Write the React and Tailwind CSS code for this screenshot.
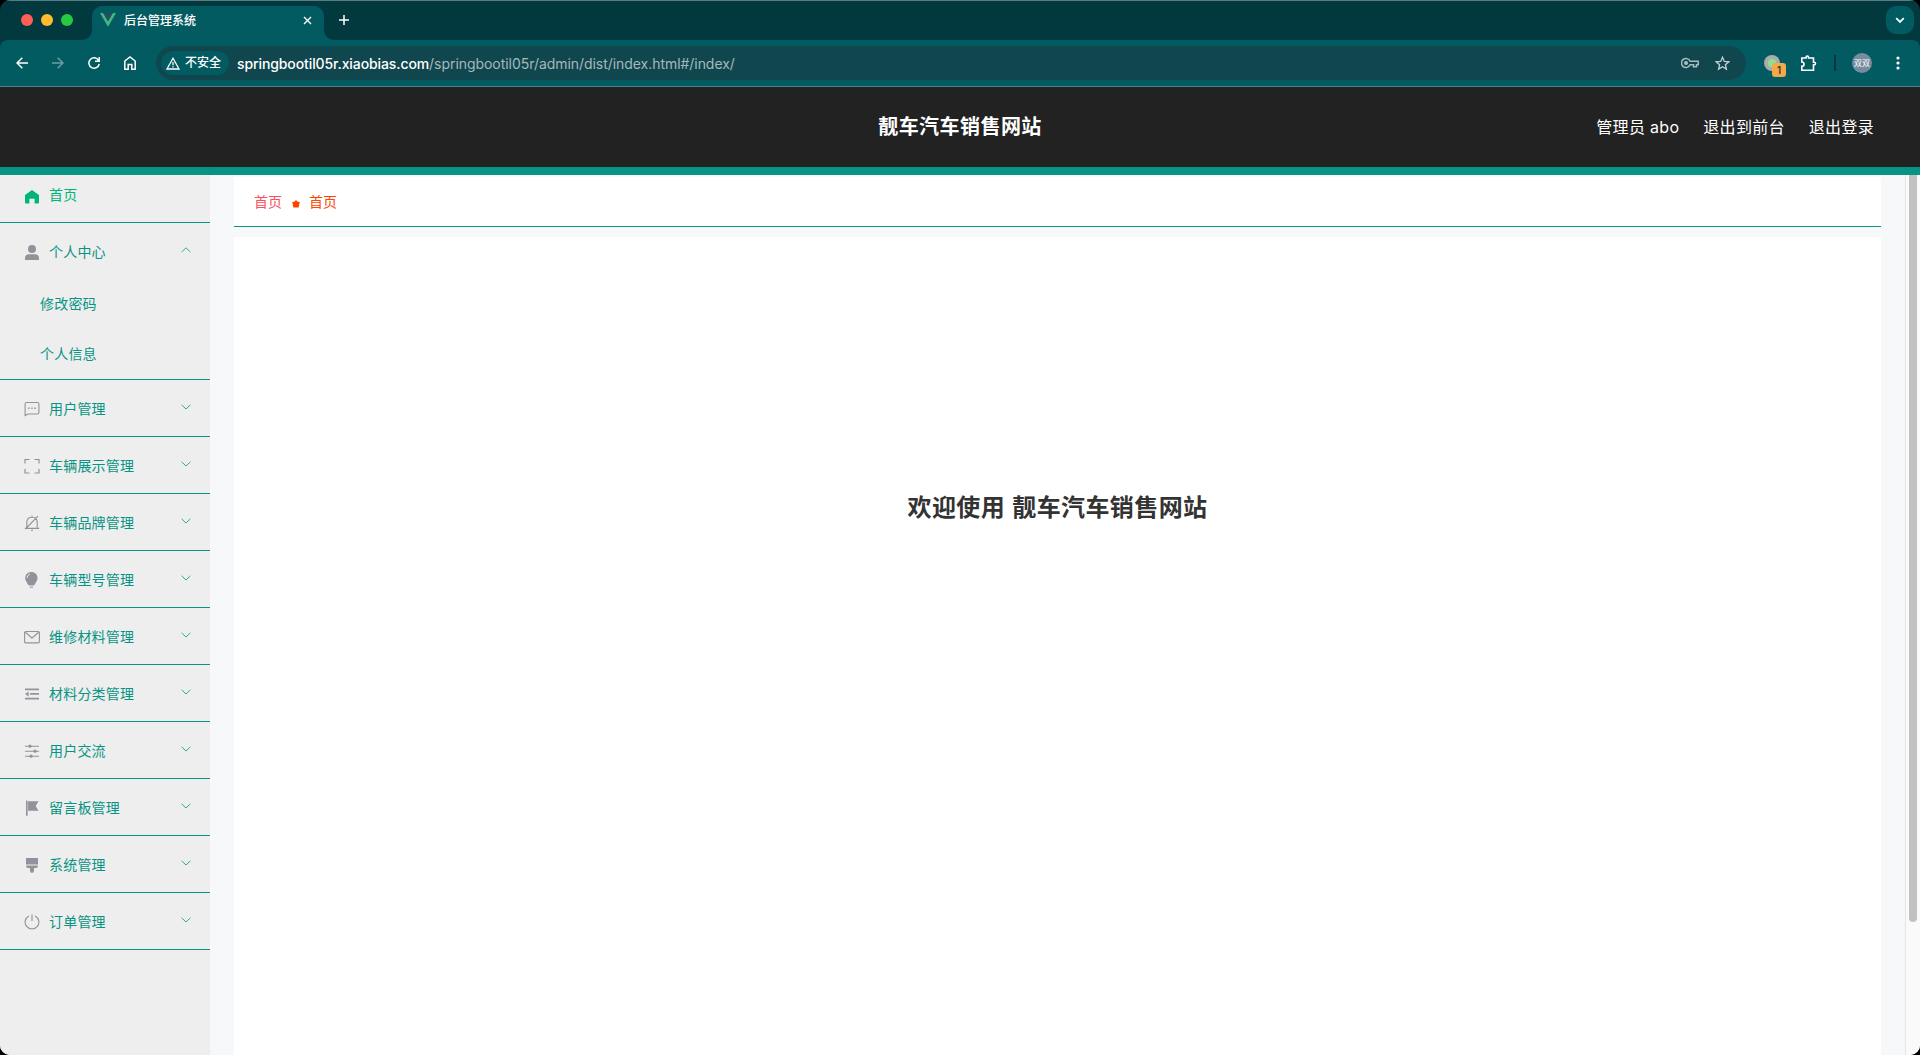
import React, { useState } from "react";

const iconColor = "#909399";

const icons = {
  home: (
    <svg width="14" height="14" viewBox="0 0 14 14" fill="#00b578">
      <path d="M7 0L13.6 4.8C13.9 5 14 5.3 14 5.6V12.6C14 13.1 13.6 13.5 13.1 13.5H9.6V8.8H4.4V13.5H.9C.4 13.5 0 13.1 0 12.6V5.6C0 5.3.1 5 .4 4.8Z" />
    </svg>
  ),
  user: (
    <svg width="14" height="15" viewBox="0 0 14 15" fill={iconColor}>
      <circle cx="7" cy="4" r="4" />
      <path d="M0 15V13C0 10.8 1.6 9.2 3.8 9.2H10.2C12.4 9.2 14 10.8 14 13V15Z" />
    </svg>
  ),
  chat: (
    <svg width="16" height="16" viewBox="0 0 16 16" fill="none" stroke={iconColor} strokeWidth="1.1">
      <path d="M1.1 14.6V3Q1.1 1.5 2.6 1.5H13.4Q14.9 1.5 14.9 3V11.5Q14.9 13 13.4 13H4Z" />
      <path d="M4.2 7.2H5.6M7.3 7.2H8.7M10.4 7.2H11.8" strokeWidth="1.4" />
    </svg>
  ),
  screen: (
    <svg width="16" height="16" viewBox="0 0 16 16" fill="none" stroke={iconColor}>
      <path d="M1 5.5V1.5H5.5M10.5 1.5H15V5.5M15 11V15H10.5M5.5 15H1V11" strokeWidth="1.2" />
    </svg>
  ),
  bell: (
    <svg width="16" height="16" viewBox="0 0 16 16" fill="none" stroke={iconColor} strokeWidth="1.1">
      <path d="M.8 13.4H15.2M2.8 13V7.5C2.8 4.2 5 2.2 8 2.2S13.2 4.2 13.2 7.5V13M8 .6V2.2M1.4 14L14 1.2M7 15.3H9" />
    </svg>
  ),
  bulb: (
    <svg width="16" height="16" viewBox="0 0 16 16" fill={iconColor}>
      <path d="M7.3 0C3.8 0 1.2 2.6 1.2 6C1.2 9 3 10.4 4.2 12.8Q4.5 13.6 5.2 13.6H9.5Q10.2 13.6 10.5 12.8C11.7 10.4 13.5 9 13.5 6C13.5 2.6 10.9 0 7.3 0Z" />
      <path d="M5.8 14.7H9V15.7H5.8Z" />
      <path d="M3 6Q3.2 2.8 6 1.9" fill="none" stroke="#eee" strokeWidth=".9" />
    </svg>
  ),
  mail: (
    <svg width="16" height="16" viewBox="0 0 16 16" fill="none" stroke={iconColor} strokeWidth="1.1">
      <rect x=".6" y="2.5" width="14.8" height="11.4" rx="1.2" />
      <path d="M1 3L8 9L15 3" />
    </svg>
  ),
  fold: (
    <svg width="16" height="16" viewBox="0 0 16 16" fill={iconColor}>
      <path d="M1 2.4H15V4.2H1ZM6 7H15V8.8H6ZM1 11.8H15V13.6H1ZM1 7.9L4.6 5.4V10.4Z" />
    </svg>
  ),
  operation: (
    <svg width="16" height="16" viewBox="0 0 16 16" fill={iconColor}>
      <path d="M1 2.8H15V3.7H1ZM1 7.8H15V8.7H1ZM1 12.8H15V13.7H1Z" />
      <circle cx="6" cy="3.2" r="1.6" />
      <circle cx="11" cy="8.2" r="1.6" />
      <circle cx="7" cy="13.2" r="1.6" />
    </svg>
  ),
  flag: (
    <svg width="16" height="16" viewBox="0 0 16 16" fill={iconColor}>
      <path d="M2 .5H3.6V15.7H2ZM4.1 1.2H14.6L11.6 6L14.6 10.8H4.1Z" />
    </svg>
  ),
  brush: (
    <svg width="16" height="16" viewBox="0 0 16 16" fill={iconColor}>
      <path d="M2 1H14V7.6H2ZM2 8.4H14C14 10 13 11 11.4 11H10V13.5C10 15 9.2 15.8 8 15.8S6 15 6 13.5V11H4.6C3 11 2 10 2 8.4Z" />
    </svg>
  ),
  power: (
    <svg width="16" height="16" viewBox="0 0 16 16" fill="none" stroke={iconColor} strokeWidth="1.1">
      <path d="M5 1.9A6.9 6.9 0 1 0 11 1.9M8 .6V7" />
    </svg>
  ),
};

const menus = [
  { name: "个人中心", icon: "user", children: ["修改密码", "个人信息"] },
  { name: "用户管理", icon: "chat" },
  { name: "车辆展示管理", icon: "screen" },
  { name: "车辆品牌管理", icon: "bell" },
  { name: "车辆型号管理", icon: "bulb" },
  { name: "维修材料管理", icon: "mail" },
  { name: "材料分类管理", icon: "fold" },
  { name: "用户交流", icon: "operation" },
  { name: "留言板管理", icon: "flag" },
  { name: "系统管理", icon: "brush" },
  { name: "订单管理", icon: "power" },
];

const TabStrip = () => (
  <div className="flex h-10 shrink-0 items-end border-t border-[#5b7c80] bg-[#02393e]">
    <div className="flex h-[39px] w-[92px] shrink-0 items-center gap-2 pb-px pl-[21px]">
      <span className="h-3 w-3 rounded-full bg-[#ff5f57]" />
      <span className="h-3 w-3 rounded-full bg-[#febc2e]" />
      <span className="h-3 w-3 rounded-full bg-[#28c840]" />
    </div>
    <div className="relative flex h-[34px] w-[232px] shrink-0 items-center rounded-t-[10px] bg-[#035b62] pr-3 pl-2 text-white">
      <svg className="absolute bottom-0 -left-[10px]" width="10" height="10" fill="#035b62">
        <path d="M10 0V10H0A10 10 0 0 0 10 0Z" />
      </svg>
      <svg className="absolute -right-[10px] bottom-0" width="10" height="10" fill="#035b62">
        <path d="M0 0V10H10A10 10 0 0 1 0 0Z" />
      </svg>
      <svg className="mb-1.5" width="16" height="14" viewBox="0 0 16 14">
        <path d="M0 0H3.2L8 8.3L12.8 0H16L8 13.8Z" fill="#41b883" />
        <path d="M3.2 0H6.1L8 3.3L9.9 0H12.8L8 8.3Z" fill="#35495e" />
      </svg>
      <span className="mb-[5px] ml-2 flex-1 text-[12px] leading-4 font-medium">后台管理系统</span>
      <svg className="mb-[5px]" width="9" height="9" viewBox="0 0 9 9" stroke="#fff" strokeWidth="1.4">
        <path d="M1 1L8 8M8 1L1 8" />
      </svg>
    </div>
    <svg className="mb-[15px] ml-[15px]" width="10" height="10" viewBox="0 0 10 10" stroke="#fff" strokeWidth="1.5">
      <path d="M5 0V10M0 5H10" />
    </svg>
    <div className="mr-1.5 mb-1.5 ml-auto flex h-7 w-7 items-center justify-center rounded-[10px] bg-[#035b62]">
      <svg width="10" height="7" viewBox="0 0 10 7" fill="none" stroke="#fff" strokeWidth="1.8">
        <path d="M1.2 1.2L5 5L8.8 1.2" />
      </svg>
    </div>
  </div>
);

const Toolbar = () => (
  <div className="shrink-0 bg-[#02393e]">
    <div className="flex h-[47px] items-center rounded-t-[8px] border-b border-[#4d8388] bg-[#035b62] text-white">
      <div className="flex w-[156px] shrink-0 items-center pl-4">
        <svg width="12" height="12" viewBox="0 0 12 12" fill="none" stroke="#fff" strokeWidth="1.5">
          <path d="M12 6H1M6.3 .7L1 6L6.3 11.3" />
        </svg>
        <svg className="ml-6" width="12" height="12" viewBox="0 0 12 12" fill="none" stroke="#6f9da2" strokeWidth="1.5">
          <path d="M0 6H11M5.7 .7L11 6L5.7 11.3" />
        </svg>
        <svg className="ml-6" width="12" height="12" viewBox="0 0 12 12" fill="none" stroke="#fff" strokeWidth="1.5">
          <path d="M10.6 3.4A5.2 5.2 0 1 0 11.2 7M11.2 0V4.2H7" />
        </svg>
        <svg className="ml-6" width="12" height="14" viewBox="0 0 12 14" fill="none" stroke="#fff" strokeWidth="1.5">
          <path d="M.8 5L6 1L11.2 5V13.2H7.8V8.5H4.2V13.2H.8Z" />
        </svg>
      </div>
      <div className="flex h-[34px] w-[1590px] shrink-0 items-center rounded-full bg-[#10474e] pr-4 pl-[5px]">
        <div className="flex h-6 w-[68px] items-center gap-[5px] rounded-full bg-[#035b62] pl-[5px]">
          <svg width="14" height="13" viewBox="0 0 14 13" fill="none" stroke="#fff" strokeWidth="1.3">
            <path d="M7 1.3L13 12H1ZM7 5V8.3M7 9.2V10.5" />
          </svg>
          <span className="text-[12px] font-medium whitespace-nowrap">不安全</span>
        </div>
        <div className="ml-2 flex-1 text-[14px] tracking-[-0.05px] text-[#a3b9bb]">
          <span className="font-medium tracking-[-0.1px] text-white">springbootil05r.xiaobias.com</span>/springbootil05r/admin/dist/index.html#/index/
        </div>
        <svg width="18" height="12" viewBox="0 0 18 12" fill="none" stroke="#a9bcbd" strokeWidth="1.5">
          <path d="M9.1 4.2A4.5 4.5 0 1 0 9.1 7.8H12.5V9.8H15.5V7.8H17.2V4.2Z" />
          <circle cx="5" cy="6" r="1.3" fill="#a9bcbd" />
        </svg>
        <svg className="ml-4" width="15" height="15" viewBox="0 0 15 15" fill="none" stroke="#c3d0d1" strokeWidth="1.3">
          <path d="M7.5 1.3L9.3 5.4L13.8 5.8L10.4 8.7L11.4 13.1L7.5 10.8L3.6 13.1L4.6 8.7L1.2 5.8L5.7 5.4Z" />
        </svg>
      </div>
      <div className="relative ml-[18px] h-4 w-4 rounded-full bg-[#a9acad] p-1">
        <div className="h-2 w-2 rounded-full bg-[#8de18f]" />
        <span className="absolute top-2 left-2 flex h-[14px] w-[14px] items-center justify-center rounded-[3px] bg-[#f2a94a] text-[10px] font-medium text-[#222]">1</span>
      </div>
      <svg className="ml-5" width="17" height="17" viewBox="0 0 17 17" fill="none" stroke="#fff" strokeWidth="1.6">
        <path d="M1.8 3H6V2.4A1.3 1.3 0 0 1 8.6 2.4V3H13.5V7.3H14.2A1.3 1.3 0 0 1 14.2 9.9H13.5V15.2H1.8V11.4A2.2 2.2 0 0 0 1.8 7Z" />
      </svg>
      <span className="ml-[17px] h-4 w-[2px] bg-[#02393e]" />
      <span className="ml-4 flex h-5 w-5 items-center justify-center rounded-full bg-[#778d9d] text-[8px] whitespace-nowrap">双双</span>
      <svg className="ml-6" width="4" height="14" fill="#fff">
        <circle cx="2" cy="2" r="1.6" />
        <circle cx="2" cy="7" r="1.6" />
        <circle cx="2" cy="12" r="1.6" />
      </svg>
    </div>
  </div>
);

const Header = () => (
  <div className="grid h-[88px] shrink-0 grid-cols-3 items-center border-b-8 border-[#089484] bg-[#222] text-white">
    <div />
    <h1 className="text-center text-[20px] font-bold tracking-[0.45px]">靓车汽车销售网站</h1>
    <div className="flex justify-end gap-6 pr-[46px] text-[16px] tracking-[0.3px]">
      <span>管理员 abo</span>
      <span>退出到前台</span>
      <span>退出登录</span>
    </div>
  </div>
);

const Sidebar = () => {
  const [opened, setOpened] = useState("个人中心");

  return (
    <div className="w-[210px] shrink-0 bg-[#eee] text-[14px] tracking-[0.2px] text-[#089484]">
      <div className="flex h-12 items-center border-b border-[#089484] pb-2 pl-6 text-[#00b578]">
        <span className="mt-1 flex w-6 items-center pl-px">{icons.home}</span>
        <span className="ml-px">首页</span>
      </div>
      {menus.map((menu) => (
        <div key={menu.name} className="border-b border-[#089484]">
          <div className="flex h-14 cursor-pointer items-center pl-6" onClick={() => setOpened(menu.name)}>
            <span className="mt-0.5 flex w-[25px] items-center">
              <span className="flex w-4 justify-center">{icons[menu.icon]}</span>
            </span>
            <span>{menu.name}</span>
            <svg className="mr-[19px] mb-0.5 ml-auto" width="10" height="6" viewBox="0 0 10 6" fill="none" stroke="#089484" strokeWidth=".8">
              {menu.children && opened === menu.name ? <path d="M.6 5L5 .8L9.4 5" /> : <path d="M.6 .8L5 5L9.4 .8" />}
            </svg>
          </div>
          {menu.children && opened === menu.name && (
            <ul>
              {menu.children.map((child) => (
                <li key={child} className="flex h-[50px] items-center pb-0.5 pl-10">{child}</li>
              ))}
            </ul>
          )}
        </div>
      ))}
    </div>
  );
};

const App = () => {
  return (
    <div className="h-[1055px] bg-black">
      <div className="flex h-full flex-col overflow-hidden rounded-[10px] font-['Inter','Noto_Sans_CJK_SC',sans-serif]">
        <TabStrip />
        <Toolbar />
        <Header />
        <div className="flex min-h-0 flex-1 bg-[#f6f8fa]">
          <Sidebar />
          <div className="ml-6 flex w-[1647px] flex-col pt-0.5">
            <div className="flex h-[50px] shrink-0 items-center border-b border-[#089484] bg-white pl-5 text-[14px]">
              <span className="text-[#ff4d5e]">首页</span>
              <svg className="mt-1 ml-[10px]" width="8" height="8" viewBox="0 0 8 8" fill="#ff4500">
                <path d="M4 0L5.3 1.5L7.8 2L7.2 4.5L6.7 7.6H1.3L.8 4.5L.2 2L2.7 1.5Z" />
              </svg>
              <span className="ml-[9px] text-[#ff4500]">首页</span>
            </div>
            <div className="mt-[10px] flex flex-1 justify-center bg-white pt-[253px]">
              <h2 className="text-[24px] leading-9 font-bold tracking-[0.4px] text-[#333] [word-spacing:1px]">欢迎使用 靓车汽车销售网站</h2>
            </div>
          </div>
          <div className="ml-auto w-[15px] border-l border-[#e5e5e5] bg-[#fafafa] pl-[3px]">
            <div className="h-[747px] w-2 rounded-b-full bg-[#c1c1c1]" />
          </div>
        </div>
      </div>
    </div>
  );
};

export default App;
